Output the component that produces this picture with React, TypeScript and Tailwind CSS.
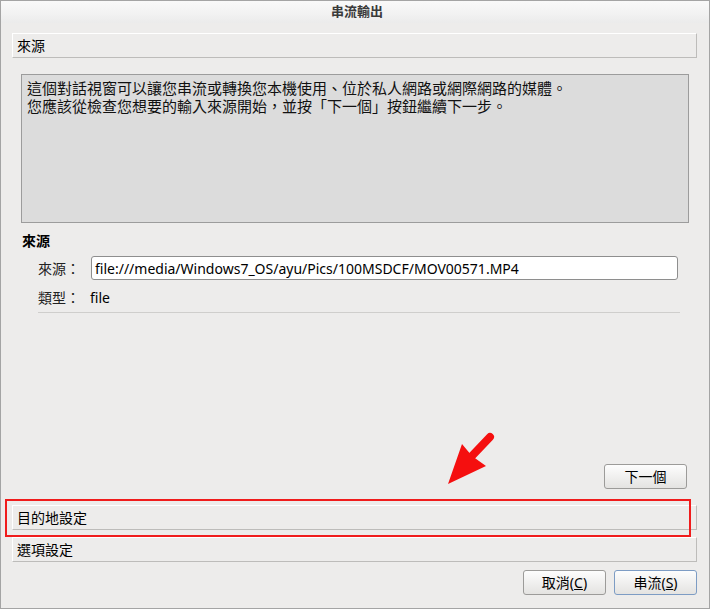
import React from "react";

const FONT = "font-['Noto_Sans','Noto_Sans_CJK_TC',sans-serif]";

function SectionHeader({ label }: { label: string }) {
  return (
    <div className="h-[25px] shrink-0 flex items-center pl-[4px] border-t border-l border-t-white border-l-white border-b border-r border-b-[#bdbcba] border-r-[#bdbcba] text-[14px] leading-none text-black">
      {label}
    </div>
  );
}

function Button({ children, primary }: { children: React.ReactNode; primary?: boolean }) {
  return (
    <button
      className={
        "w-[83px] h-[25px] rounded-[3px] border bg-gradient-to-b from-[#fdfdfd] to-[#e4e3e1] text-[14px] leading-none text-black flex items-center justify-center " +
        (primary ? "border-[#7d9cc4]" : "border-[#9c9b99]")
      }
    >
      {children}
    </button>
  );
}

export default function App() {
  return (
    <div
      className={`${FONT} relative w-[710px] h-[609px] bg-[#edeceb] border border-[#a4a4a4] flex flex-col overflow-hidden`}
    >
      {/* title bar */}
      <div className="h-[22px] shrink-0 bg-gradient-to-b from-[#f9f9f9] via-[#f3f3f3] to-[#ebebeb] flex items-center justify-center pl-[4px] text-[13px] font-bold text-[#3a3a3a]">
        串流輸出
      </div>

      <div className="flex-1 flex flex-col pl-[11px] pr-[12px] pt-[10px] pb-[13px]">
        <SectionHeader label="來源" />

        {/* page: source */}
        <div className="flex-1 flex flex-col pl-[9px] pr-[8px] pt-[16px]">
          <div className="h-[149px] shrink-0 border border-[#9c9c9c] bg-[#dcdcdc] px-[5px] pt-[4px] text-[15px] leading-[18px] text-[#111]">
            <div>這個對話視窗可以讓您串流或轉換您本機使用、位於私人網路或網際網路的媒體。</div>
            <div>您應該從檢查您想要的輸入來源開始，並按「下一個」按鈕繼續下一步。</div>
          </div>

          <div className="mt-[9px] h-[18px] pl-[1px] text-[14px] leading-[18px] font-bold text-black">來源</div>

          <div className="mt-[6px] pl-[17px] pr-[11px] flex items-center">
            <div className="w-[53px] shrink-0 text-[14px] text-[#222]">來源：</div>
            <div className="flex-1 h-[24px] rounded-[3px] border border-[#8e8e8e] bg-white flex items-center pl-[3px] text-[14px] text-black">
              file:///media/Windows7_OS/ayu/Pics/100MSDCF/MOV00571.MP4
            </div>
          </div>

          <div className="mt-[8px] pl-[17px] flex items-center h-[18px]">
            <div className="w-[52px] shrink-0 text-[14px] text-[#222]">類型：</div>
            <div className="text-[14px] text-black">file</div>
          </div>

          <div className="mt-[6px] ml-[17px] mr-[9px] h-px bg-[#cfcecc]" />

          <div className="flex-1" />

          <div className="flex justify-end pr-[2px] mb-[16px]">
            <Button>下一個</Button>
          </div>
        </div>

        <SectionHeader label="目的地設定" />
        <div className="h-[7px]" />
        <SectionHeader label="選項設定" />

        <div className="mt-[8px] flex justify-end gap-[8px]">
          <Button>
            取消(<span className="underline">C</span>)
          </Button>
          <Button primary>
            串流(<span className="underline">S</span>)
          </Button>
        </div>
      </div>

      {/* annotation: red highlight box */}
      <div className="absolute left-[4px] top-[498px] w-[686px] h-[38px] border-2 border-[#f01c1c] pointer-events-none" />

      {/* annotation: red arrow */}
      <svg className="absolute left-[439px] top-[427px]" width="60" height="62" viewBox="0 0 60 62">
        <line x1="50" y1="9" x2="30" y2="30" stroke="#f50f0f" strokeWidth="8" strokeLinecap="round" />
        <polygon points="8,56 22,16 32,28 46,38" fill="#f50f0f" />
      </svg>
    </div>
  );
}
